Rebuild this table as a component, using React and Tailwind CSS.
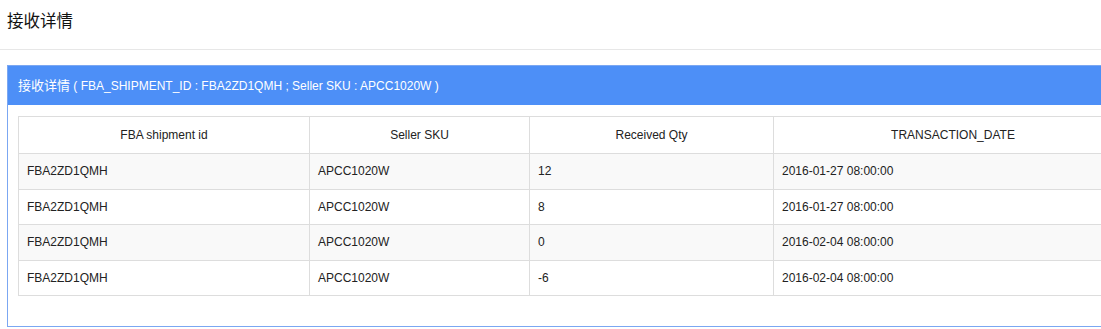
const rows = [
  { id: "FBA2ZD1QMH", sku: "APCC1020W", qty: "12", date: "2016-01-27 08:00:00" },
  { id: "FBA2ZD1QMH", sku: "APCC1020W", qty: "8", date: "2016-01-27 08:00:00" },
  { id: "FBA2ZD1QMH", sku: "APCC1020W", qty: "0", date: "2016-02-04 08:00:00" },
  { id: "FBA2ZD1QMH", sku: "APCC1020W", qty: "-6", date: "2016-02-04 08:00:00" },
];

const font = {
  fontFamily: '"Liberation Sans", "Noto Sans CJK SC", sans-serif',
};

export default function App() {
  return (
    <div className="w-full h-[329px] overflow-hidden bg-white text-[#333]" style={font}>
      <div className="w-[1151px]">
        {/* page title */}
        <div className="h-[50px] border-b border-[#e7e7e7] pl-[7px] pt-[9px]">
          <h1 className="text-[16.5px] leading-[24px] text-[#111]">接收详情</h1>
        </div>

        <div className="px-[7px] pt-[15px]">
          <div className="border border-[#7ba7f2]">
            <div className="h-[39px] bg-[#4d8ff7] px-[10px] flex items-center text-white text-[12px]">
              <span className="text-[13px]">接收详情</span>
              <span>&nbsp;( FBA_SHIPMENT_ID : FBA2ZD1QMH ; Seller SKU : APCC1020W )</span>
            </div>
            <div className="px-[10px] pt-[11px] pb-[30px]">
              <table className="w-full border-collapse text-[12px] table-fixed">
                <colgroup>
                  <col className="w-[291px]" />
                  <col className="w-[220px]" />
                  <col className="w-[244px]" />
                  <col />
                </colgroup>
                <thead>
                  <tr className="h-[37px]">
                    <th className="border border-[#ddd] font-normal text-center text-[#222]">FBA shipment id</th>
                    <th className="border border-[#ddd] font-normal text-center text-[#222]">Seller SKU</th>
                    <th className="border border-[#ddd] font-normal text-center text-[#222]">Received Qty</th>
                    <th className="border border-[#ddd] font-normal text-center text-[#222]">TRANSACTION_DATE</th>
                  </tr>
                </thead>
                <tbody>
                  {rows.map((r, i) => (
                    <tr key={i} className={`h-[35.5px] ${i % 2 === 0 ? "bg-[#f9f9f9]" : "bg-white"}`}>
                      <td className="border border-[#ddd] px-2 text-[#222]">{r.id}</td>
                      <td className="border border-[#ddd] px-2 text-[#222]">{r.sku}</td>
                      <td className="border border-[#ddd] px-2 text-[#222]">{r.qty}</td>
                      <td className="border border-[#ddd] px-2 text-[#222]">{r.date}</td>
                    </tr>
                  ))}
                </tbody>
              </table>
            </div>
          </div>
        </div>
      </div>
    </div>
  );
}
